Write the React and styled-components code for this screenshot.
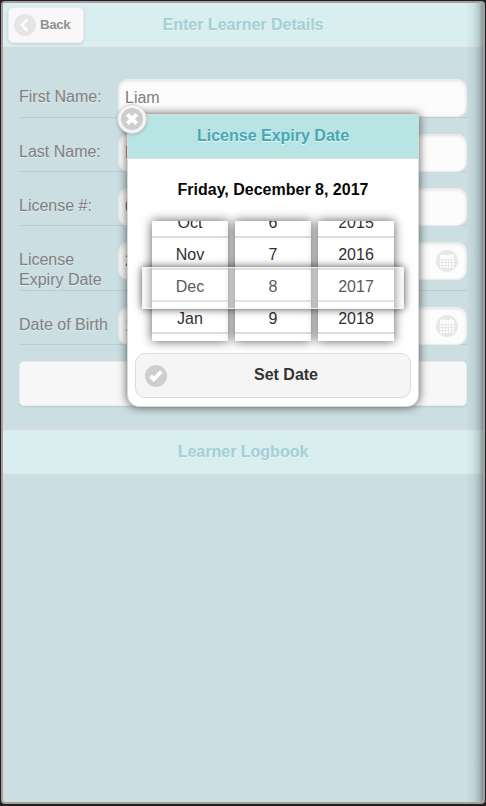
import React from "react";
import styled, { createGlobalStyle } from "styled-components";

const Global = createGlobalStyle`
  *, *::before, *::after { box-sizing: border-box; }
  html, body { margin: 0; background: #231f20; }
  body { font-family: "Liberation Sans", Arial, sans-serif; font-size: 16px; line-height: 20px; }
`;

const Device = styled.div`
  position: relative;
  width: 486px;
  height: 806px;
  padding: 1px 1px 2px 1px;
  background: #231f20;
  overflow: hidden;
`;

const Screen = styled.main`
  position: relative;
  height: 100%;
  border: 2px solid #a69fa0;
  border-radius: 4px;
  background: #cbdee2;
  overflow: hidden;
`;

const EdgeShade = styled.div`
  position: absolute;
  top: 0;
  right: 0;
  bottom: 0;
  width: 17px;
  pointer-events: none;
  background: linear-gradient(to right, rgba(60, 85, 90, 0), rgba(60, 85, 90, 0.08) 45%, rgba(60, 80, 85, 0.25) 78%, rgba(50, 65, 70, 0.5));
`;

const Bar = styled.header`
  display: flex;
  align-items: center;
  justify-content: center;
  position: relative;
  height: 44px;
  border-top: ${(p) => (p.$divider ? "1px solid #e9e5e6" : "0")};
  border-bottom: 1px solid #e6e6e6;
  background: #d9eeee;
`;

const Title = styled.h1`
  margin: 0;
  font-size: 16px;
  line-height: 20px;
  color: #9fd1d8;
  text-shadow: 0 1px 0 #f0eeee;
`;

const BackButton = styled.button`
  position: absolute;
  left: 5px;
  top: 4px;
  display: flex;
  align-items: center;
  gap: 4px;
  width: 76px;
  height: 36px;
  padding: 0 0 0 5px;
  border: 1px solid #ebebeb;
  border-radius: 5px;
  background: #f8f8f8;
  box-shadow: 0 1px 3px rgba(0, 0, 0, 0.12);
  color: #929292;
  font: bold 13.3px/16px "Liberation Sans", Arial, sans-serif;
  letter-spacing: -0.4px;
`;

const Form = styled.form`
  display: flex;
  flex-direction: column;
  height: 383px;
  padding: 16px 16px 0;
`;

const Field = styled.label`
  display: flex;
  align-items: flex-start;
  height: ${(p) => p.$height}px;
  padding-top: 16px;
  border-bottom: 1px solid #bccdd1;
`;

const FieldLabel = styled.span`
  width: 99px;
  padding: 8px 8px 0 0;
  color: #7e8081;
  text-shadow: 0 1px 0 #e4eaeb;
`;

const Entry = styled.span`
  display: flex;
  align-items: center;
  justify-content: space-between;
  flex: 1;
  height: 38px;
  padding: 0 8px 0 6px;
  border: 1px solid #ebebeb;
  border-radius: 10px;
  background: #fcfcfc;
  box-shadow: inset 0 1px 3px rgba(0, 0, 0, 0.11);
  color: #7e7e7e;
`;

const SaveButton = styled.button`
  height: 45px;
  margin-top: 16px;
  border: 1px solid #ebebeb;
  border-radius: 5px;
  background: #f7f7f7;
  box-shadow: 0 1px 2px rgba(0, 0, 0, 0.08);
`;

const Dialog = styled.section`
  position: absolute;
  left: 124px;
  top: 111px;
  width: 292px;
  height: 293px;
  border: 1px solid #d9d9d9;
  border-radius: 2px 2px 12px 12px;
  background: #fff;
  box-shadow: 0 0 10px rgba(0, 0, 0, 0.65);
`;

const DialogHeader = styled.header`
  display: flex;
  align-items: center;
  justify-content: center;
  height: 44px;
  padding-bottom: 2px;
  border-bottom: 1px solid #d6dcdc;
  background: #b8e5e3;
`;

const DialogTitle = styled.h2`
  margin: 0;
  font-size: 16px;
  line-height: 20px;
  color: #43a8b5;
  text-shadow: 0 1px 0 #f3f3f3;
`;

const CloseButton = styled.button`
  position: absolute;
  left: -11px;
  top: -11px;
  width: 30px;
  height: 30px;
  padding: 3px;
  border: 1px solid #d8d8d8;
  border-radius: 50%;
  background: #f5f5f5;
  box-shadow: 0 1px 3px rgba(0, 0, 0, 0.2);
  display: flex;
  align-items: center;
  justify-content: center;
`;

const DateHeading = styled.p`
  margin: 21px 0 0;
  text-align: center;
  font-weight: bold;
  color: #080808;
`;

const Picker = styled.div`
  position: relative;
  display: flex;
  justify-content: center;
  gap: 7px;
  height: 120px;
  margin-top: 21px;
`;

const Wheel = styled.div`
  width: 76px;
  height: 120px;
  overflow: hidden;
  background: #fff;
  box-shadow: 0 0 10px rgba(0, 0, 0, 0.65);
`;

const Choices = styled.ul`
  list-style: none;
  margin: -15px 0 0;
  padding: 0;
`;

const Choice = styled.li`
  height: 32px;
  padding-top: 7px;
  border-bottom: 2px solid #dcdcdc;
  text-align: center;
  line-height: 20px;
  color: #303030;
`;

const Lens = styled.div`
  position: absolute;
  left: 14px;
  top: 46px;
  width: 262px;
  height: 42px;
  border: 1px solid #f2f2f2;
  background: rgba(255, 255, 255, 0.2);
  box-shadow: 0 0 8px rgba(0, 0, 0, 0.7);
`;

const SetButton = styled.button`
  position: relative;
  display: flex;
  align-items: center;
  justify-content: center;
  width: 276px;
  height: 45px;
  margin: 12px 0 0 7px;
  border: 1px solid #dcdcdc;
  border-radius: 10px;
  background: #f5f5f5;
  padding: 0 0 1px 26px;
  color: #333;
  font: bold 16px/20px "Liberation Sans", Arial, sans-serif;
`;

const CheckBadge = styled.span`
  position: absolute;
  left: 9px;
  top: 11px;
  display: flex;
`;

const ChevronIcon = () => (
  <svg width="22" height="22" viewBox="0 0 22 22">
    <circle cx="11" cy="11" r="11" fill="#e5e5e5" />
    <path d="M13.5 5.3 8 11l5.5 5.7" fill="none" stroke="#fbfbfb" strokeWidth="2.9" />
  </svg>
);

const CrossIcon = () => (
  <svg width="22" height="22" viewBox="0 0 22 22">
    <circle cx="11" cy="11" r="11" fill="#cecece" />
    <path d="m6.3 6.3 9.4 9.4M15.7 6.3l-9.4 9.4" fill="none" stroke="#fff" strokeWidth="4" />
  </svg>
);

const CheckIcon = () => (
  <svg width="22" height="22" viewBox="0 0 22 22">
    <circle cx="11" cy="11" r="11" fill="#cecece" />
    <path d="m5.5 10.8 3.4 3.5 7.4-7.8" fill="none" stroke="#fff" strokeWidth="3.9" />
  </svg>
);

const CalendarIcon = () => (
  <svg width="22" height="22" viewBox="0 0 22 22">
    <circle cx="11" cy="11" r="11" fill="#e8e8e8" />
    <path d="M4 9V5h2V4h2v1h6V4h2v1h2v4z" fill="#fcfcfc" />
    {[10, 13, 16].map((y) =>
      [4, 7, 10, 13, 16].map((x) => (
        <rect key={`${x}-${y}`} x={x} y={y} width="2" height="2" fill="#fcfcfc" />
      ))
    )}
  </svg>
);

const fields = [
  { label: "First Name:", value: "Liam", height: 55 },
  { label: "Last Name:", value: "L", height: 54 },
  { label: "License #:", value: "0", height: 54 },
  { label: "License Expiry Date", value: "2", height: 65, date: true },
  { label: "Date of Birth", value: "1", height: 54, date: true },
];

const wheels = [
  ["Oct", "Nov", "Dec", "Jan", ""],
  ["6", "7", "8", "9", ""],
  ["2015", "2016", "2017", "2018", ""],
];

export default function App() {
  return (
    <>
      <Global />
      <Device>
        <Screen>
          <Bar>
            <BackButton type="button">
              <ChevronIcon />
              Back
            </BackButton>
            <Title>Enter Learner Details</Title>
          </Bar>
          <Form>
            {fields.map((f) => (
              <Field key={f.label} $height={f.height}>
                <FieldLabel>{f.label}</FieldLabel>
                <Entry>
                  {f.value}
                  {f.date && <CalendarIcon />}
                </Entry>
              </Field>
            ))}
            <SaveButton type="button" aria-label="Save" />
          </Form>
          <Bar $divider>
            <Title>Learner Logbook</Title>
          </Bar>
          <EdgeShade />
          <Dialog role="dialog">
            <DialogHeader>
              <DialogTitle>License Expiry Date</DialogTitle>
            </DialogHeader>
            <CloseButton type="button" aria-label="Close">
              <CrossIcon />
            </CloseButton>
            <DateHeading>Friday, December 8, 2017</DateHeading>
            <Picker>
              {wheels.map((items, i) => (
                <Wheel key={i}>
                  <Choices>
                    {items.map((item) => (
                      <Choice key={item}>{item}</Choice>
                    ))}
                  </Choices>
                </Wheel>
              ))}
              <Lens />
            </Picker>
            <SetButton type="button">
              <CheckBadge>
                <CheckIcon />
              </CheckBadge>
              Set Date
            </SetButton>
          </Dialog>
        </Screen>
      </Device>
    </>
  );
}
